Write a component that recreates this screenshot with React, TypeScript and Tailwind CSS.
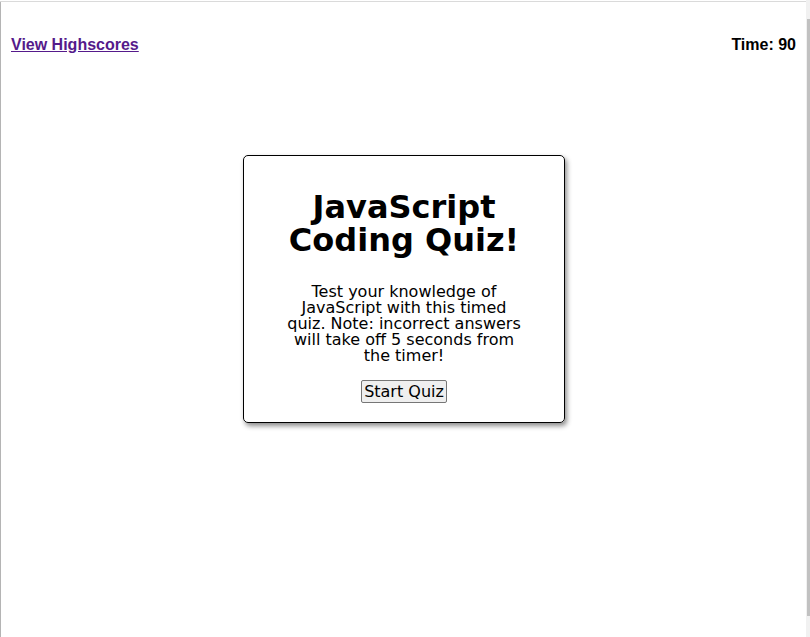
import React from "react";

export default function App() {
  return (
    <div className="relative w-[810px] h-[637px] bg-white overflow-hidden">
      <div className="absolute left-0 top-[1px] w-[806px] h-px bg-[#dadada]" />
      <div className="absolute left-0 top-[2px] w-px h-[635px] bg-[#b4b4b4]" />
      <div className="absolute right-0 top-0 w-[4px] h-[637px] bg-[#f1f1f1]" />
      <div className="absolute right-0 top-[19px] w-[3px] h-[597px] bg-[#c1c1c1]" />

      <div className="pt-[36px] pl-[11px] pr-[14px] flex justify-between items-center font-['Liberation_Sans',Arial,sans-serif] font-bold text-[16px] leading-[18px]">
        <a href="#" className="text-[#551a8b] underline">View Highscores</a>
        <span className="text-black">Time: 90</span>
      </div>

      <div className="mt-[101px] ml-[243px] w-[322px] h-[268px] border border-black rounded-[5px] shadow-[2px_3px_5px_rgba(0,0,0,0.45)] flex flex-col items-center font-['DejaVu_Sans',Verdana,sans-serif] text-black">
        <h1 className="mt-[35px] text-[32px] leading-[33px] font-bold text-center w-[260px]">
          JavaScript Coding Quiz!
        </h1>
        <p className="mt-[27px] text-[16px] leading-[16px] text-center w-[245px]">
          Test your knowledge of JavaScript with this timed quiz. Note: incorrect answers will take off 5 seconds from the timer!
        </p>
        <button className="mt-[16px] px-[2px] h-[23px] text-[16px] leading-[18px] bg-[#efefef] border border-[#767676] rounded-[2px] font-['DejaVu_Sans',Verdana,sans-serif]">
          Start Quiz
        </button>
      </div>
    </div>
  );
}
